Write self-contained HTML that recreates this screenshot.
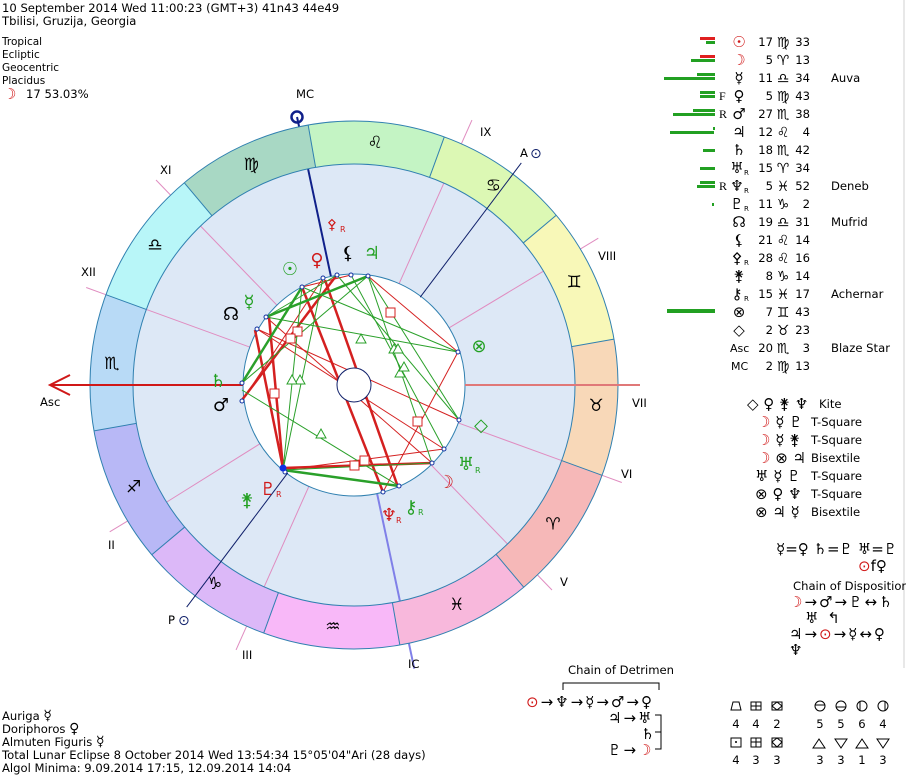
<!DOCTYPE html>
<html><head><meta charset="utf-8"><style>
body{margin:0;background:#fff;width:906px;height:775px;overflow:hidden}
svg{display:block;font-family:"DejaVu Sans","Liberation Sans",sans-serif;font-size:11.6px}
text{fill:#000}
.g{fill:#22a022}.r{fill:#d01818}
.z{font-size:17px}
.z text{text-anchor:middle;dominant-baseline:central}
</style></head><body>
<svg width="906" height="775" viewBox="0 0 906 775" xmlns="http://www.w3.org/2000/svg">
<line x1="904" y1="0" x2="904" y2="668" stroke="#d0d0d0"/>
<text x="2" y="12">10 September 2014  Wed  11:00:23 (GMT+3) 41n43  44e49</text>
<text x="2" y="25">Tbilisi, Gruzija, Georgia</text>
<text x="2" y="45" style="font-size:10.5px">Tropical</text>
<text x="2" y="58" style="font-size:10.5px">Ecliptic</text>
<text x="2" y="71" style="font-size:10.5px">Geocentric</text>
<text x="2" y="84" style="font-size:10.5px">Placidus</text>
<text x="3" y="99" class="r" style="font-size:15px">☽</text><text x="26" y="98">17 53.03%</text>

<g transform="translate(354,385)">
  <circle r="221" fill="#dde8f6"/>
  <g stroke="#e08cc0" stroke-width="1">
    <line x1="111" x2="221" transform="rotate(-212)"/><line x1="111" x2="221" transform="rotate(-246)"/>
    <line x1="111" x2="221" transform="rotate(-314)"/><line x1="111" x2="221" transform="rotate(-340)"/>
    <line x1="111" x2="221" transform="rotate(-31)"/><line x1="111" x2="221" transform="rotate(-66)"/>
    <line x1="111" x2="221" transform="rotate(-134)"/><line x1="111" x2="221" transform="rotate(-160)"/>
    <line x1="264" x2="285" transform="rotate(-211)"/><line x1="264" x2="290" transform="rotate(-246)"/>
    <line x1="264" x2="285" transform="rotate(-314)"/><line x1="264" x2="285" transform="rotate(-340)"/>
    <line x1="264" x2="285" transform="rotate(-31)"/><line x1="264" x2="290" transform="rotate(-66)"/>
    <line x1="264" x2="285" transform="rotate(-134)"/><line x1="264" x2="285" transform="rotate(-160)"/>
  </g>
  <line x1="111" x2="274" transform="rotate(-102)" stroke="#10208a" stroke-width="2"/>
  <circle cx="-57" cy="-268" r="5.5" fill="none" stroke="#10208a" stroke-width="2.5"/>
  <line x1="111" x2="290" transform="rotate(-282)" stroke="#8080e8" stroke-width="2"/>
  <g fill="none" stroke-width="43">
    <circle r="242.5" stroke="#f6b8b8" stroke-dasharray="127 1397" transform="rotate(20)"/>
    <circle r="242.5" stroke="#f8d8b8" stroke-dasharray="127 1397" transform="rotate(-10)"/>
    <circle r="242.5" stroke="#f8f8b8" stroke-dasharray="127 1397" transform="rotate(-40)"/>
    <circle r="242.5" stroke="#dcf8b4" stroke-dasharray="127 1397" transform="rotate(-70)"/>
    <circle r="242.5" stroke="#c4f4c4" stroke-dasharray="127 1397" transform="rotate(-100)"/>
    <circle r="242.5" stroke="#a8d8c4" stroke-dasharray="127 1397" transform="rotate(-130)"/>
    <circle r="242.5" stroke="#b8f6f8" stroke-dasharray="127 1397" transform="rotate(-160)"/>
    <circle r="242.5" stroke="#b8daf6" stroke-dasharray="127 1397" transform="rotate(-190)"/>
    <circle r="242.5" stroke="#b8b8f6" stroke-dasharray="127 1397" transform="rotate(-220)"/>
    <circle r="242.5" stroke="#dcb8f8" stroke-dasharray="127 1397" transform="rotate(-250)"/>
    <circle r="242.5" stroke="#f8b8f8" stroke-dasharray="127 1397" transform="rotate(-280)"/>
    <circle r="242.5" stroke="#f8b8dc" stroke-dasharray="127 1397" transform="rotate(-310)"/>
  </g>
  <circle r="264" fill="none" stroke="#3080b0"/>
  <circle r="221" fill="none" stroke="#3080b0"/>
  <g stroke="#3080b0">
    <line x1="221" x2="264" transform="rotate(50)"/><line x1="221" x2="264" transform="rotate(20)"/>
    <line x1="221" x2="264" transform="rotate(-10)"/><line x1="221" x2="264" transform="rotate(-40)"/>
    <line x1="221" x2="264" transform="rotate(-70)"/><line x1="221" x2="264" transform="rotate(-100)"/>
    <line x1="221" x2="264" transform="rotate(-130)"/><line x1="221" x2="264" transform="rotate(-160)"/>
    <line x1="221" x2="264" transform="rotate(-190)"/><line x1="221" x2="264" transform="rotate(-220)"/>
    <line x1="221" x2="264" transform="rotate(-250)"/><line x1="221" x2="264" transform="rotate(-280)"/>
  </g>
  <g class="z">
    <g transform="rotate(35) translate(243,0) rotate(-35)"><text>♈</text></g>
    <g transform="rotate(5) translate(243,0) rotate(-5)"><text>♉</text></g>
    <g transform="rotate(-25) translate(243,0) rotate(25)"><text>♊</text></g>
    <g transform="rotate(-55) translate(243,0) rotate(55)"><text>♋</text></g>
    <g transform="rotate(-85) translate(243,0) rotate(85)"><text>♌</text></g>
    <g transform="rotate(-115) translate(243,0) rotate(115)"><text>♍</text></g>
    <g transform="rotate(-145) translate(243,0) rotate(145)"><text>♎</text></g>
    <g transform="rotate(-175) translate(243,0) rotate(175)"><text>♏</text></g>
    <g transform="rotate(-205) translate(243,0) rotate(205)"><text>♐</text></g>
    <g transform="rotate(-235) translate(243,0) rotate(235)"><text>♑</text></g>
    <g transform="rotate(-265) translate(243,0) rotate(265)"><text>♒</text></g>
    <g transform="rotate(-295) translate(243,0) rotate(295)"><text>♓</text></g>
  </g>
  <circle r="111" fill="#fff" stroke="#3080b0"/>
  <line x1="110" x2="278" transform="rotate(-53)" stroke="#10206a"/>
  <line x1="110" x2="278" transform="rotate(-233)" stroke="#10206a"/>
</g>
<line x1="465" y1="385" x2="640" y2="385" stroke="#e07878" stroke-width="2"/>
<line x1="50" y1="385" x2="243" y2="385" stroke="#d01818" stroke-width="2"/>
<polyline points="70,375 50,385 70,395" fill="none" stroke="#d01818" stroke-width="2"/>

<g stroke-width="1" fill="none">
 <g stroke="#d42020">
  <line x1="368" y1="276" x2="458" y2="352"/>
  <line x1="458" y1="352" x2="383" y2="492"/>
  <line x1="257" y1="329" x2="444" y2="449"/>
  <line x1="266" y1="317" x2="432" y2="463"/>
  <line x1="257" y1="329" x2="459" y2="420"/>
  <line x1="283" y1="470" x2="444" y2="449"/>
  <line x1="351" y1="275" x2="302" y2="287"/>
  <line x1="323" y1="278" x2="242" y2="401"/>
 </g>
 <g stroke="#d42020" stroke-width="2.5">
  <line x1="325" y1="280" x2="398" y2="487"/>
  <line x1="302" y1="287" x2="383" y2="492"/>
  <line x1="269" y1="317" x2="283" y2="468"/>
  <line x1="242" y1="400" x2="336" y2="276"/>
  <line x1="283" y1="468" x2="432" y2="463"/>
  <line x1="255" y1="330" x2="283" y2="468"/>
 </g>
 <g stroke="#2aa02a">
  <line x1="368" y1="276" x2="459" y2="420"/>
  <line x1="242" y1="383" x2="368" y2="276"/>
  <line x1="266" y1="317" x2="458" y2="352"/>
  <line x1="302" y1="287" x2="283" y2="470"/>
  <line x1="323" y1="278" x2="283" y2="470"/>
  <line x1="242" y1="390" x2="399" y2="486"/>
  <line x1="368" y1="276" x2="432" y2="463"/>
  <line x1="351" y1="275" x2="444" y2="449"/>
  <line x1="337" y1="275" x2="459" y2="420"/>
  <line x1="302" y1="287" x2="458" y2="352"/>
  <line x1="283" y1="470" x2="432" y2="463"/>
  <line x1="337" y1="275" x2="266" y2="317"/>
 </g>
 <g stroke="#2aa02a" stroke-width="2.5">
  <line x1="266" y1="317" x2="368" y2="276"/>
  <line x1="283" y1="470" x2="399" y2="486"/>
  <line x1="242" y1="383" x2="302" y2="287"/>
 </g>
 <g stroke="#d42020" fill="#fff">
  <rect x="386" y="308" width="9" height="9"/><rect x="293" y="327" width="9" height="9"/>
  <rect x="286" y="334" width="9" height="9"/><rect x="270" y="389" width="9" height="9"/>
  <rect x="413" y="417" width="9" height="9"/><rect x="360" y="456" width="9" height="9"/>
  <rect x="350" y="461" width="9" height="9"/>
 </g>
 <g stroke="#2aa02a" fill="#fff">
  <polygon points="361,334 366,343 356,343"/><polygon points="394,344 399,353 389,353"/>
  <polygon points="398,344 403,353 393,353"/><polygon points="300,375 305,384 295,384"/>
  <polygon points="292,375 297,384 287,384"/><polygon points="400,368 405,377 395,377"/>
  <polygon points="321,429 326,438 316,438"/><polygon points="404,362 409,371 399,371"/>
 </g>
</g>
<circle cx="354" cy="385" r="17" fill="#fff" stroke="#10206a"/>
<g fill="#fff" stroke="#1030a0">
 <circle cx="323" cy="278" r="2"/><circle cx="337" cy="275" r="2"/><circle cx="351" cy="275" r="2"/>
 <circle cx="368" cy="276" r="2"/><circle cx="302" cy="287" r="2"/><circle cx="266" cy="317" r="2"/>
 <circle cx="257" cy="329" r="2"/><circle cx="242" cy="383" r="2"/><circle cx="242" cy="401" r="2"/>
 <circle cx="458" cy="352" r="2"/><circle cx="459" cy="420" r="2"/><circle cx="444" cy="449" r="2"/>
 <circle cx="432" cy="463" r="2"/><circle cx="399" cy="486" r="2"/><circle cx="383" cy="492" r="2"/>
 <circle cx="285" cy="472" r="2"/>
</g>
<circle cx="283" cy="468" r="3.5" fill="#1030e0"/>

<g style="font-size:18px" text-anchor="middle">
 <text x="332" y="229" class="r" style="font-size:14px">⚴</text>
 <text x="348" y="259" style="font-weight:bold">⚸</text><text x="372" y="259" class="g">♃</text>
 <text x="290" y="275" class="g">☉</text><text x="317" y="266" class="r">♀</text>
 <text x="249" y="308" class="g">☿</text><text x="231" y="320">☊</text>
 <text x="218" y="387" class="g">♄</text><text x="221" y="411">♂</text>
 <text x="479" y="352" class="g">⊗</text><text x="481" y="431" class="g">◇</text>
 <text x="466" y="470" class="g">♅</text>
 <text x="446" y="488" class="r">☽</text>
 <text x="389" y="521" class="r">♆</text>
 <text x="411" y="513" class="g">⚷</text>
 <text x="268" y="495" class="r">♇</text>
 <text x="247" y="506" class="g">⚵</text>
</g>
<g style="font-size:8px">
 <text x="340" y="232" class="r">R</text><text x="475" y="473" class="g">R</text>
 <text x="396" y="523" class="r">R</text><text x="418" y="515" class="g">R</text>
 <text x="276" y="497" class="r">R</text>
</g>
<text x="296" y="98">MC</text>
<text x="408" y="668">IC</text>
<text x="40" y="406">Asc</text>
<text x="520" y="157">A</text><text x="530" y="158" style="fill:#10206a;font-size:14px">⊙</text>
<text x="168" y="624">P</text><text x="178" y="625" style="fill:#10206a;font-size:14px">⊙</text>
<text x="160" y="174">XI</text><text x="81" y="276">XII</text><text x="108" y="549">II</text>
<text x="242" y="659">III</text><text x="480" y="136">IX</text><text x="598" y="260">VIII</text>
<text x="632" y="407">VII</text><text x="621" y="478">VI</text><text x="560" y="586">V</text>

<g>
 <rect x="700" y="37" width="15" height="3" fill="#e02020"/><rect x="706" y="41" width="9" height="3" fill="#22a022"/>
 <rect x="700" y="55" width="15" height="3" fill="#e02020"/><rect x="691" y="59" width="24" height="3" fill="#22a022"/>
 <rect x="697" y="73" width="18" height="3" fill="#22a022"/><rect x="664" y="77" width="51" height="3" fill="#22a022"/>
 <rect x="700" y="91" width="15" height="3" fill="#22a022"/><rect x="700" y="95" width="15" height="3" fill="#22a022"/>
 <rect x="693" y="109" width="22" height="3" fill="#22a022"/><rect x="673" y="113" width="42" height="3" fill="#22a022"/>
 <rect x="713" y="127" width="2" height="3" fill="#22a022"/><rect x="670" y="131" width="44" height="3" fill="#22a022"/>
 <rect x="703" y="149" width="12" height="3" fill="#22a022"/>
 <rect x="700" y="167" width="15" height="3" fill="#22a022"/>
 <rect x="700" y="181" width="15" height="3" fill="#22a022"/><rect x="697" y="185" width="18" height="3" fill="#22a022"/>
 <rect x="712" y="203" width="2" height="3" fill="#22a022"/>
 <rect x="667" y="309" width="48" height="4" fill="#22a022"/>
</g>
<g style="font-family:'Liberation Serif',serif;font-size:12px">
 <text x="719" y="100">F</text><text x="719" y="118">R</text><text x="719" y="190">R</text>
</g>
<g style="font-size:15px" text-anchor="middle">
 <text x="739" y="47" class="r">☉</text><text x="739" y="65" class="r">☽</text><text x="739" y="83">☿</text>
 <text x="739" y="101">♀</text><text x="739" y="119">♂</text><text x="739" y="137">♃</text>
 <text x="739" y="155">♄</text><text x="737" y="173">♅</text><text x="737" y="191">♆</text>
 <text x="737" y="209">♇</text><text x="739" y="227">☊</text><text x="739" y="245">⚸</text>
 <text x="737" y="263">⚴</text><text x="739" y="281">⚵</text><text x="737" y="299">⚷</text>
 <text x="739" y="317">⊗</text><text x="739" y="335">◇</text>
</g>
<g style="font-size:7px">
 <text x="744" y="175">R</text><text x="744" y="193">R</text><text x="744" y="211">R</text>
 <text x="744" y="265">R</text><text x="744" y="301">R</text>
</g>
<text x="730" y="352" style="font-size:11px">Asc</text><text x="731" y="370" style="font-size:11px">MC</text>
<g text-anchor="end">
 <text x="773" y="46">17</text><text x="773" y="64">5</text><text x="773" y="82">11</text>
 <text x="773" y="100">5</text><text x="773" y="118">27</text><text x="773" y="136">12</text>
 <text x="773" y="154">18</text><text x="773" y="172">15</text><text x="773" y="190">5</text>
 <text x="773" y="208">11</text><text x="773" y="226">19</text><text x="773" y="244">21</text>
 <text x="773" y="262">28</text><text x="773" y="280">8</text><text x="773" y="298">15</text>
 <text x="773" y="316">7</text><text x="773" y="334">2</text><text x="773" y="352">20</text>
 <text x="773" y="370">2</text>
</g>
<g style="font-size:14px" text-anchor="middle">
 <text x="783" y="47">♍</text><text x="783" y="65">♈</text><text x="783" y="83">♎</text>
 <text x="783" y="101">♍</text><text x="783" y="119">♏</text><text x="783" y="137">♌</text>
 <text x="783" y="155">♏</text><text x="783" y="173">♈</text><text x="783" y="191">♓</text>
 <text x="783" y="209">♑</text><text x="783" y="227">♎</text><text x="783" y="245">♌</text>
 <text x="783" y="263">♌</text><text x="783" y="281">♑</text><text x="783" y="299">♓</text>
 <text x="783" y="317">♊</text><text x="783" y="335">♉</text><text x="783" y="353">♏</text>
 <text x="783" y="371">♍</text>
</g>
<g text-anchor="end">
 <text x="810" y="46">33</text><text x="810" y="64">13</text><text x="810" y="82">34</text>
 <text x="810" y="100">43</text><text x="810" y="118">38</text><text x="810" y="136">4</text>
 <text x="810" y="154">42</text><text x="810" y="172">34</text><text x="810" y="190">52</text>
 <text x="810" y="208">2</text><text x="810" y="226">31</text><text x="810" y="244">14</text>
 <text x="810" y="262">16</text><text x="810" y="280">14</text><text x="810" y="298">17</text>
 <text x="810" y="316">43</text><text x="810" y="334">23</text><text x="810" y="352">3</text>
 <text x="810" y="370">13</text>
</g>
<text x="831" y="82">Auva</text><text x="831" y="190">Deneb</text><text x="831" y="226">Mufrid</text>
<text x="831" y="298">Achernar</text><text x="831" y="352">Blaze Star</text>

<g style="font-size:15px">
 <text x="747" y="409">◇ ♀ ⚵ ♆</text>
 <text x="757" y="427"><tspan class="r">☽</tspan> ☿ ♇</text>
 <text x="757" y="445"><tspan class="r">☽</tspan> ☿ ⚵</text>
 <text x="757" y="463"><tspan class="r">☽</tspan> ⊗ ♃</text>
 <text x="755" y="481">♅ ☿ ♇</text>
 <text x="755" y="499">⊗ ♀ ♆</text>
 <text x="755" y="517">⊗ ♃ ☿</text>
 <text x="776" y="554">☿=♀ ♄=♇ ♅=♇</text>
 <text x="858" y="571"><tspan class="r">⊙</tspan>f♀</text>
</g>
<text x="819" y="408">Kite</text>
<text x="811" y="426">T-Square</text><text x="811" y="444">T-Square</text><text x="811" y="462">Bisextile</text>
<text x="811" y="480">T-Square</text><text x="811" y="498">T-Square</text><text x="811" y="516">Bisextile</text>
<text x="793" y="590">Chain of Disposition</text>
<g style="font-size:15px;letter-spacing:2px">
 <text x="789" y="607"><tspan class="r">☽</tspan>→♂→♇↔♄</text>
 <text x="805" y="623">♅ ↰</text>
 <text x="789" y="639">♃→<tspan class="r">⊙</tspan>→☿↔♀</text>
 <text x="789" y="655">♆</text>
</g>
<text x="568" y="674">Chain of Detrimen</text>
<polyline points="563,690 563,683 659,683 659,690" fill="none" stroke="#000"/>
<g style="font-size:15px;letter-spacing:2px">
 <text x="526" y="707"><tspan class="r">⊙</tspan>→♆→☿→♂→♀</text>
 <text x="608" y="723">♃→♅</text>
 <text x="641" y="739">♄</text>
 <text x="608" y="755">♇→<tspan class="r">☽</tspan></text>
</g>
<polyline points="655,715 661,715 661,749 655,749" fill="none" stroke="#000"/>
<line x1="655" y1="732" x2="661" y2="732" stroke="#000"/>
<text x="2" y="720">Auriga  <tspan style="font-size:14px">☿</tspan></text>
<text x="2" y="733">Doriphoros  <tspan style="font-size:14px">♀</tspan></text>
<text x="2" y="746">Almuten Figuris  <tspan style="font-size:14px">☿</tspan></text>
<text x="2" y="759">Total Lunar Eclipse 8 October 2014 Wed 13:54:34 15°05'04"Ari (28 days)</text>
<text x="2" y="772">Algol Minima: 9.09.2014 17:15,  12.09.2014 14:04</text>
<g fill="none" stroke="#000">
 <polygon points="731,710 741,710 739,702 733,702"/><rect x="751" y="702" width="10" height="8"/><line x1="756" y1="702" x2="756" y2="710"/><line x1="751" y1="706" x2="761" y2="706"/>
 <rect x="772" y="702" width="10" height="8"/><polygon points="772,706 777,702 782,706 777,710"/>
 <rect x="731" y="738" width="10" height="9"/><rect x="751" y="738" width="10" height="9"/><line x1="756" y1="738" x2="756" y2="747"/><line x1="751" y1="742" x2="761" y2="742"/>
 <rect x="772" y="738" width="10" height="9"/><polygon points="772,742 777,738 782,742 777,747"/>
 <circle cx="820" cy="706" r="5"/><line x1="815" y1="705" x2="825" y2="705"/>
 <circle cx="841" cy="706" r="5"/><line x1="836" y1="707" x2="846" y2="707"/>
 <circle cx="862" cy="706" r="5"/><line x1="860" y1="701" x2="860" y2="711"/>
 <circle cx="883" cy="706" r="5"/><line x1="885" y1="701" x2="885" y2="711"/>
 <polygon points="819,739 825,748 813,748"/><polygon points="835,739 847,739 841,748"/>
 <polygon points="862,739 868,748 856,748"/><polygon points="877,739 889,739 883,748"/>
</g>
<circle cx="736" cy="742" r="1" fill="#000"/>
<g text-anchor="middle">
 <text x="736" y="728">4</text><text x="756" y="728">4</text><text x="777" y="728">2</text>
 <text x="820" y="728">5</text><text x="841" y="728">5</text><text x="862" y="728">6</text><text x="883" y="728">4</text>
 <text x="736" y="764">4</text><text x="756" y="764">3</text><text x="777" y="764">3</text>
 <text x="820" y="764">3</text><text x="841" y="764">3</text><text x="862" y="764">1</text><text x="883" y="764">3</text>
</g>
</svg>
</body></html>
